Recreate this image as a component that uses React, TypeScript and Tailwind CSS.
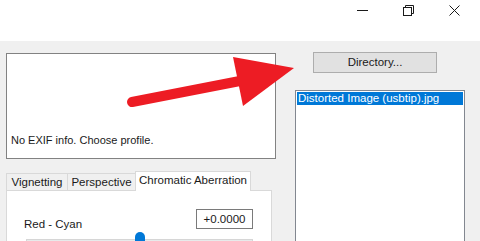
import React from 'react';

const font = { fontFamily: '"Liberation Sans", Arial, sans-serif' };

const TitleBar: React.FC = () => (
  <div className="h-[41px] bg-white flex items-start justify-end shrink-0">
    <div className="w-[46px] h-[21px] flex items-center justify-center">
      <div className="w-[11px] h-px bg-[#1a1a1a]" />
    </div>
    <div className="w-[46px] h-[21px] flex items-center justify-center">
      <svg width="11" height="11" viewBox="0 0 11 11" fill="none" stroke="#1a1a1a" strokeWidth="1">
        <rect x="0.5" y="2.5" width="8" height="8" />
        <path d="M2.5 2.5V0.5H10.5V8.5H8.5" />
      </svg>
    </div>
    <div className="w-[46px] h-[21px] flex items-center justify-center mr-[3px]">
      <svg width="11" height="11" viewBox="0 0 11 11" stroke="#1a1a1a" strokeWidth="1">
        <path d="M0.5 0.5L10.5 10.5M10.5 0.5L0.5 10.5" />
      </svg>
    </div>
  </div>
);

const Tabs: React.FC = () => {
  const tabs = [
    { t: 'Vignetting', w: 'w-[61px]' },
    { t: 'Perspective', w: 'w-[68px]' },
    { t: 'Chromatic Aberration', w: 'w-[116px]' },
  ];
  return (
    <div className="flex items-end h-[19px] relative z-10">
      {tabs.map(({ t, w }, i) => {
        const active = i === 2;
        return (
          <div key={t}
            className={(active
              ? 'h-[20px] -mb-px bg-white border border-b-0 border-[#d9d9d9] leading-[17px] '
              : 'h-[17px] bg-[#f0f0f0] border border-b-0 border-r-0 border-[#d9d9d9] leading-[17px] ') +
              w + ' text-[11.5px] text-center whitespace-nowrap text-[#1a1a1a]'}>
            {t}
          </div>
        );
      })}
    </div>
  );
};

export default function App() {
  return (
    <div className="w-[480px] h-[241px] overflow-hidden relative flex flex-col bg-[#f0f0f0]" style={font}>
      <TitleBar />
      <div className="flex-1 flex">
        <div className="pl-[6px] pt-[12px] w-[280px] flex flex-col">
          <div className="w-[270px] h-[106px] bg-white border border-[#828282] flex items-end px-[4px] pb-[10px]">
            <span className="text-[11px] leading-[16px] text-[#1a1a1a]">No EXIF info. Choose profile.</span>
          </div>
          <div className="mt-[12px]">
            <Tabs />
            <div className="w-[266px] h-[60px] bg-white border border-[#d9d9d9] pt-[15px] pl-[17px] pr-[18px]">
              <div className="flex items-center justify-between">
                <span className="text-[11.5px] leading-[16px] text-[#1a1a1a] mt-[10px]">Red - Cyan</span>
                <div className="w-[57px] h-[20px] border border-[#7a7a7a] bg-white text-[11.5px] leading-[18px] text-center text-[#1a1a1a]">+0.0000</div>
              </div>
              <div className="relative mt-[7px] ml-[2px] h-[4px] bg-[#e7eaea] border border-[#d6d6d6]">
                <div className="absolute left-[108px] -top-[8px] w-[10px] h-[16px] bg-[#0078d7] rounded-t-[5px]" />
              </div>
            </div>
          </div>
        </div>
        <div className="flex-1 flex flex-col pt-[11px]">
          <div className="ml-[33px] w-[124px] h-[21px] bg-[#e1e1e1] border border-[#adadad] text-[11.5px] leading-[19px] text-center text-[#1a1a1a]">
            Directory...
          </div>
          <div className="ml-[15px] mt-[17px] w-[170px] flex-1 bg-white border border-[#828790] border-b-0 p-px">
            <div className="bg-[#0078d7] text-white text-[11.5px] leading-[13px] h-[13px] pl-px whitespace-nowrap overflow-hidden">
              Distorted Image (usbtip).jpg
            </div>
          </div>
        </div>
      </div>
      <svg className="absolute left-0 top-0 pointer-events-none" width="480" height="241" viewBox="0 0 480 241">
        <line x1="132" y1="102" x2="245" y2="80" stroke="#ed1c24" strokeWidth="10" strokeLinecap="round" />
        <polygon points="233,57 294,68 243,106" fill="#ed1c24" />
      </svg>
    </div>
  );
}
